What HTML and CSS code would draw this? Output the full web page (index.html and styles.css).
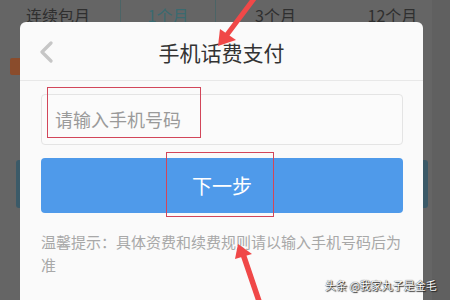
FILE: index.html
```html
<!DOCTYPE html>
<html lang="zh">
<head>
<meta charset="utf-8">
<title>手机话费支付</title>
<link rel="stylesheet" href="styles.css">
</head>
<body>
<div class="screen">
  <div class="bg">
    <div class="tabs">
      <div class="tab">连续包月</div>
      <div class="tab active">1个月</div>
      <div class="tab">3个月</div>
      <div class="tab">12个月</div>
    </div>
    <div class="bg-badge"></div>
    <div class="bg-button"></div>
  </div>

  <div class="modal">
    <div class="modal-head">
      <svg class="back" width="16" height="22" viewBox="0 0 16 22"><path d="M12 2 L3 11 L12 20" fill="none" stroke="#c6c6c6" stroke-width="3.2" stroke-linecap="round" stroke-linejoin="round"/></svg>
      <div class="title">手机话费支付</div>
    </div>
    <div class="modal-body">
      <div class="input">请输入手机号码</div>
      <div class="btn">下一步</div>
      <p class="hint">温馨提示：具体资费和续费规则请以输入手机号码后为准</p>
    </div>
  </div>

  <div class="mark mark-input"></div>
  <div class="mark mark-btn"></div>

  <svg class="arrows" width="450" height="300" viewBox="0 0 450 300">
    <line x1="256" y1="-4" x2="226" y2="36" stroke="#f04848" stroke-width="5" stroke-linecap="round"/>
    <polygon points="218,46 220,29 236,40" fill="#f04848"/>
    <line x1="260" y1="304" x2="243" y2="254" stroke="#f04848" stroke-width="5.5" stroke-linecap="round"/>
    <polygon points="238,244 235,259 252,254" fill="#f04848"/>
  </svg>

  <div class="watermark">头条 @我家丸子是金毛</div>
</div>
</body>
</html>
```

FILE: styles.css
```css
* { box-sizing: border-box; }
html, body { margin: 0; padding: 0; }
body {
  width: 450px;
  height: 300px;
  overflow: hidden;
  font-family: "Noto Sans CJK SC", "Noto Sans", sans-serif;
  background: #656565;
}
.screen {
  position: relative;
  width: 450px;
  height: 300px;
  overflow: hidden;
  background: linear-gradient(to right, #656565 0, #656565 432px, #606060 432px);
}
.bg { position: absolute; inset: 0; }
.tabs {
  display: grid;
  grid-template-columns: 120px 95px 120px 115px;
  height: 30px;
}
.tab {
  font-size: 16px;
  line-height: 30px;
  color: #2f2f2f;
  text-align: center;
  border-left: 1px solid #4b6466;
}
.tab:first-child { border-left: none; text-align: left; padding-left: 26px; }
.tab:last-child { border-left: none; }
.tab.active { color: #3a6a70; }
.bg-badge {
  position: absolute;
  left: 10px; top: 58px;
  width: 14px; height: 17px;
  background: #8a4c2c;
  border-radius: 2px;
}
.bg-button {
  position: absolute;
  left: 16px; top: 160px;
  width: 412px; height: 48px;
  background: #3b5a68;
  border-radius: 3px;
}
.modal {
  position: absolute;
  left: 20px; top: 22px;
  width: 403px; height: 278px;
  background: #fafafa;
  border-radius: 6px 6px 0 0;
}
.modal-head {
  position: relative;
  height: 59px;
  border-bottom: 1px solid #e8e8e8;
  display: flex;
  align-items: center;
  justify-content: center;
}
.back { position: absolute; left: 19px; top: 19px; }
.title {
  font-size: 21px;
  color: #333;
  margin-top: 2px;
}
.modal-body {
  padding: 13px 20px 0 21px;
  display: flex;
  flex-direction: column;
}
.input {
  height: 51px;
  border: 1px solid #e4e4e4;
  border-radius: 4px;
  background: #fbfbfb;
  padding-left: 13px;
  font-size: 18px;
  line-height: 49px;
  color: #9a9a9a;
}
.btn {
  margin-top: 13px;
  height: 55px;
  border-radius: 4px;
  background: #4f9aea;
  color: #fff;
  font-size: 20px;
  line-height: 55px;
  text-align: center;
}
.hint {
  margin: 17px 0 0;
  font-size: 15px;
  line-height: 23px;
  color: #a8a8a8;
}
.mark {
  position: absolute;
  border: 1px solid #d2465a;
}
.mark-input { left: 47px; top: 87px; width: 154px; height: 51px; }
.mark-btn { left: 166px; top: 152px; width: 108px; height: 65px; }
.arrows { position: absolute; left: 0; top: 0; }
.watermark {
  position: absolute;
  left: 325px; top: 277px;
  font-size: 11px;
  line-height: 16px;
  color: #fff;
  text-shadow: 0 0 1px #000, 1px 1px 1px #222;
  white-space: nowrap;
}
```
